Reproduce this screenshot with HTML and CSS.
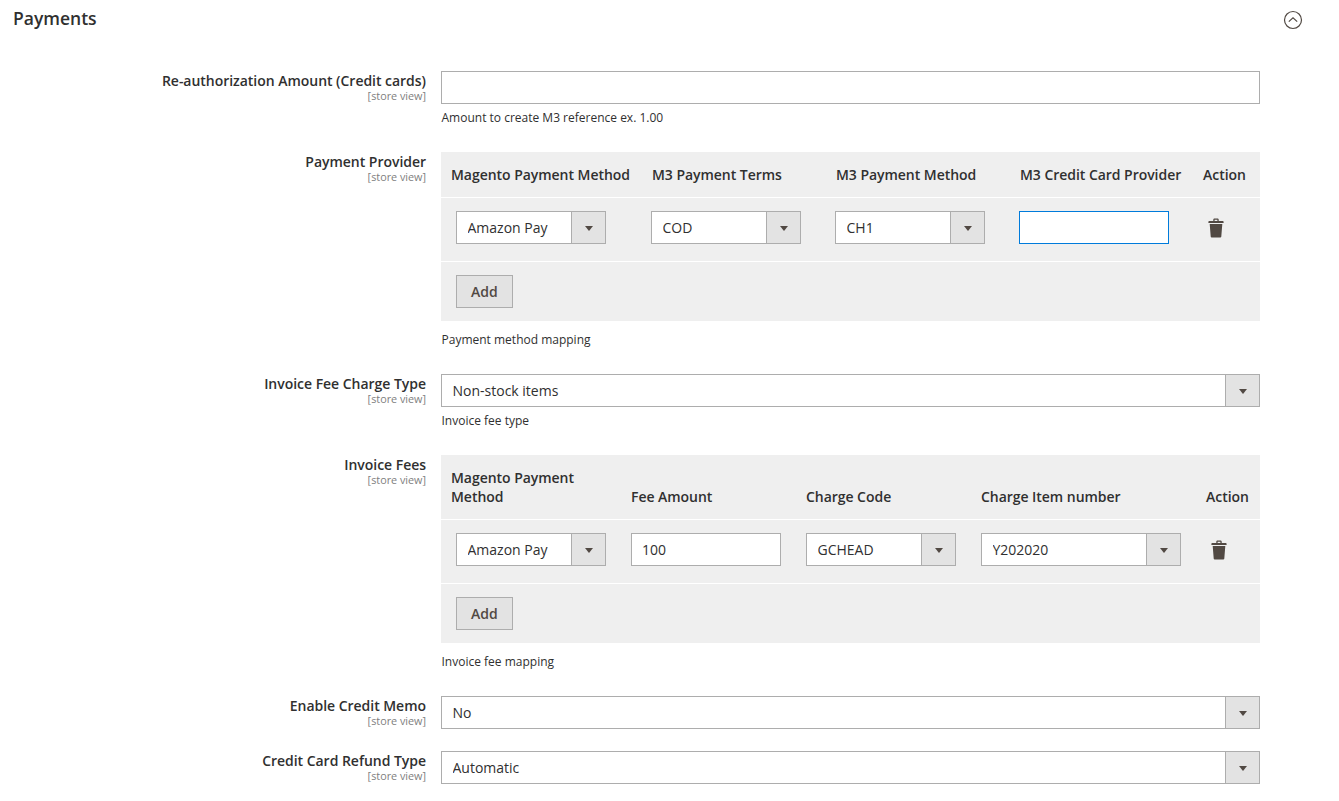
FILE: index.html
```html
<!DOCTYPE html>
<html lang="en">
<head>
<meta charset="utf-8">
<title>Payments</title>
<link rel="stylesheet" href="styles.css">
</head>
<body>
<section class="section">
  <header class="section-head">
    <h2 class="section-title">Payments</h2>
    <svg class="collapse-icon" width="20" height="20" viewBox="0 0 20 20" aria-hidden="true"><circle cx="10" cy="10" r="8.5"/><path d="M5.8 11.6 10 7.9l4.2 3.7"/></svg>
  </header>
  <div class="fields">
    <div class="field">
      <div class="label"><span class="label-text">Re-authorization Amount (Credit cards)</span><span class="scope">[store view]</span></div>
      <div class="control">
        <input class="input" type="text">
        <p class="note">Amount to create M3 reference ex. 1.00</p>
      </div>
    </div>
    <div class="field">
      <div class="label"><span class="label-text">Payment Provider</span><span class="scope">[store view]</span></div>
      <div class="control">
        <div class="grid-table">
          <div class="thead thead-a">
            <div>Magento Payment Method</div><div>M3 Payment Terms</div><div>M3 Payment Method</div><div>M3 Credit Card Provider</div><div>Action</div>
          </div>
          <div class="tbody tbody-a">
            <div class="select"><select><option>Amazon Pay</option></select></div>
            <div class="select"><select><option>COD</option></select></div>
            <div class="select"><select><option>CH1</option></select></div>
            <input class="input input-focus" type="text">
            <svg class="trash" width="16" height="20" viewBox="0 0 16 20" aria-hidden="true"><path d="M5.3 3V1.6C5.3.8 5.9.4 6.6.4h2.8c.7 0 1.3.4 1.3 1.2V3h4.1c.5 0 .8.3.8.8v1.1H.4V3.8c0-.5.3-.8.8-.8zm1.3 0h2.8V1.700H6.600zM1.700 6h12.600l-1 12.500c-.1.7-.6 1.100-1.200 1.100H3.900c-.6 0-1.100-.4-1.200-1.100z"/></svg>
          </div>
          <div class="tfoot"><button class="btn" type="button">Add</button></div>
        </div>
        <p class="note note-table">Payment method mapping</p>
      </div>
    </div>
    <div class="field">
      <div class="label"><span class="label-text">Invoice Fee Charge Type</span><span class="scope">[store view]</span></div>
      <div class="control">
        <div class="select"><select><option>Non-stock items</option></select></div>
        <p class="note">Invoice fee type</p>
      </div>
    </div>
    <div class="field">
      <div class="label"><span class="label-text">Invoice Fees</span><span class="scope">[store view]</span></div>
      <div class="control">
        <div class="grid-table">
          <div class="thead thead-b">
            <div>Magento Payment Method</div><div>Fee Amount</div><div>Charge Code</div><div>Charge Item number</div><div>Action</div>
          </div>
          <div class="tbody tbody-b">
            <div class="select"><select><option>Amazon Pay</option></select></div>
            <input class="input" type="text" value="100">
            <div class="select"><select><option>GCHEAD</option></select></div>
            <div class="select"><select><option>Y202020</option></select></div>
            <svg class="trash" width="16" height="20" viewBox="0 0 16 20" aria-hidden="true"><path d="M5.3 3V1.6C5.3.8 5.9.4 6.6.4h2.8c.7 0 1.3.4 1.3 1.2V3h4.1c.5 0 .8.3.8.8v1.1H.4V3.8c0-.5.3-.8.8-.8zm1.3 0h2.8V1.700H6.600zM1.700 6h12.600l-1 12.500c-.1.7-.6 1.100-1.200 1.100H3.900c-.6 0-1.100-.4-1.200-1.100z"/></svg>
          </div>
          <div class="tfoot"><button class="btn" type="button">Add</button></div>
        </div>
        <p class="note note-table">Invoice fee mapping</p>
      </div>
    </div>
    <div class="field">
      <div class="label"><span class="label-text">Enable Credit Memo</span><span class="scope">[store view]</span></div>
      <div class="control">
        <div class="select"><select><option>No</option></select></div>
      </div>
    </div>
    <div class="field">
      <div class="label"><span class="label-text">Credit Card Refund Type</span><span class="scope">[store view]</span></div>
      <div class="control">
        <div class="select"><select><option>Automatic</option></select></div>
      </div>
    </div>
  </div>
</section>
</body>
</html>
```
FILE: styles.css
```css
*, *::before, *::after { box-sizing: border-box; }
html, body { margin: 0; background: #fff; }
body {
  font-family: "Open Sans", "Liberation Sans", sans-serif;
  font-size: 14px;
  color: #303030;
}
.section { padding: 0 0 17px; }
.section-head {
  display: flex;
  justify-content: space-between;
  align-items: center;
  height: 71px;
  padding: 0 36px 32px 13px;
}
.section-title { margin: -2px 0 0; font-size: 17.5px; font-weight: 600; line-height: 39px; }
.collapse-icon { fill: none; stroke: #514943; stroke-width: 1.2; }
.fields { display: flex; flex-direction: column; gap: 22px; }
.field { display: flex; gap: 15px; }
.label {
  width: 426px;
  flex: none;
  display: flex;
  flex-direction: column;
  align-items: flex-end;
}
.label-text { font-weight: 600; line-height: 20px; letter-spacing: -0.03px; }
.scope { font-size: 10.8px; line-height: 10px; color: #808080; }
.control { width: 819px; flex: none; }
.note { margin: 6px 0 4px 0.5px; font-size: 12px; line-height: 16px; color: #303030; }
.note-table { margin-top: 11px; }
.input {
  display: block;
  width: 100%;
  height: 33px;
  border: 1px solid #adadad;
  background: #fff;
  padding: 0 10px;
  font: inherit;
  color: #303030;
  outline: none;
}
.input-focus { border-color: #007bdb; }
.select { position: relative; height: 33px; background: #fff; }
.select select {
  display: block;
  width: 100%;
  height: 33px;
  appearance: none;
  -webkit-appearance: none;
  border: 1px solid #adadad;
  border-radius: 0;
  background: transparent;
  padding: 0 40px 0 10.500px;
  font: inherit;
  color: #303030;
  outline: none;
}
.select::before {
  content: "";
  position: absolute;
  top: 0;
  right: 0;
  width: 35px;
  height: 33px;
  background: #e3e3e3;
  border: 1px solid #adadad;
  pointer-events: none;
}
.select::after {
  content: "";
  position: absolute;
  top: 15px;
  right: 13px;
  border-style: solid;
  border-width: 5px 4.5px 0;
  border-color: #514943 transparent transparent;
  pointer-events: none;
}
.grid-table { background: #efefef; }
.thead, .tbody { display: grid; }
.thead {
  align-items: end;
  padding: 13px 0 13px 10px;
  font-weight: 600;
  line-height: 19px;
  letter-spacing: -0.04px;
}
.thead-a { grid-template-columns: 201px 184px 184px 183px 1fr; }
.thead-b { grid-template-columns: 180px 175px 175px 225px 1fr; }
.thead-b > :first-child { width: 150px; }
.tbody {
  align-items: center;
  padding: 13px 0 17px 15px;
  border-top: 1px solid #fff;
  border-bottom: 1px solid #fff;
}
.tbody-a { grid-template-columns: 195px 184px 184px 189px 1fr; }
.tbody-a > .select, .tbody-a > .input { width: 150px; }
.tbody-b { grid-template-columns: 175px 175px 175px 230px 1fr; }
.tbody-b > .select, .tbody-b > .input { width: 150px; }
.tbody-b > :nth-child(4) { width: 200px; }
.trash { fill: #514943; display: block; }
.tfoot { padding: 13px 15px; }
.btn {
  display: block;
  height: 33px;
  padding: 0 14px;
  border: 1px solid #adadad;
  border-radius: 0;
  background: #e3e3e3;
  font: inherit;
  font-weight: 600;
  color: #514943;
}
```
